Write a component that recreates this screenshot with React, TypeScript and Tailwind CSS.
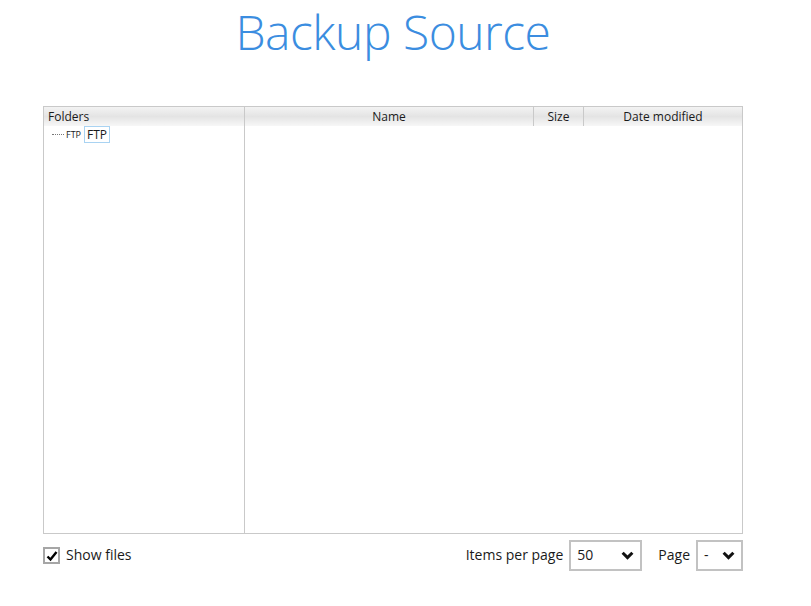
export default function App() {
  const font = { fontFamily: '"Open Sans", "Noto Sans", sans-serif' }
  return (
    <div className="w-[811px] h-[606px] bg-white text-[#1a1a1a]" style={font}>
      <div className="w-[786px]">
        <div className="h-[106px]">
          <h1 className="text-center text-[48px] font-light leading-[64px] tracking-[-0.5px] text-[#3b8de0]">
            Backup Source
          </h1>
        </div>

        {/* Browser panel */}
        <div className="ml-[43px] w-[700px] h-[428px] border border-[#c9c9c9] flex">
          {/* Folders pane */}
          <div className="w-[201px] border-r border-[#c9c9c9] flex flex-col">
            <div className="h-[19px] bg-gradient-to-b from-[#f3f3f3] via-[#e4e4e4] to-[#f7f7f7] px-[4px] text-[12px] leading-[19px]">
              Folders
            </div>
            <div className="flex items-center h-[17px] pl-[8px]">
              <div className="w-[12px] border-t border-dotted border-[#777]" />
              <span className="ml-[2px] text-[9px] leading-none">FTP</span>
              <span className="ml-[3px] border border-[#a9d3f2] px-[2px] text-[12px] leading-[15px]">FTP</span>
            </div>
          </div>

          {/* Files pane */}
          <div className="flex-1 flex flex-col">
            <div className="h-[19px] flex bg-gradient-to-b from-[#f3f3f3] via-[#e4e4e4] to-[#f7f7f7] text-[12px] leading-[19px]">
              <div className="w-[289px] text-center border-r border-[#c9c9c9]">Name</div>
              <div className="w-[50px] text-center border-r border-[#c9c9c9]">Size</div>
              <div className="flex-1 text-center">Date modified</div>
            </div>
          </div>
        </div>

        {/* Footer */}
        <div className="ml-[43px] w-[700px] mt-[6px] flex items-center">
          <label className="flex items-center gap-[6px] text-[14px] leading-[18px]">
            <span className="w-[17px] h-[17px] border-2 border-[#a6a6a6] flex items-center justify-center">
              <svg viewBox="0 0 12 12" className="w-[12px] h-[12px]">
                <path d="M1.5 6.5 L4.5 9.5 L10.5 2" fill="none" stroke="#000" strokeWidth="2.4" />
              </svg>
            </span>
            <span className="-mt-[2px]">Show files</span>
          </label>
          <div className="ml-auto flex items-center text-[14px]">
            <span className="mr-[6px] -mt-[2px]">Items per page</span>
            <div className="w-[73px] h-[31px] border-2 border-[#c2c2c2] flex items-center pl-[6px] pr-[6px]">
              <span className="-mt-[2px]">50</span>
              <svg viewBox="0 0 12 8" className="ml-auto w-[13px] h-[9px]">
                <path d="M1.5 1.5 L6 6 L10.5 1.5" fill="none" stroke="#111" strokeWidth="2.8" />
              </svg>
            </div>
            <span className="ml-[16px] mr-[6px] -mt-[2px]">Page</span>
            <div className="w-[47px] h-[31px] border-2 border-[#c2c2c2] flex items-center pl-[6px] pr-[6px]">
              <span className="-mt-[2px]">-</span>
              <svg viewBox="0 0 12 8" className="ml-auto w-[13px] h-[9px]">
                <path d="M1.5 1.5 L6 6 L10.5 1.5" fill="none" stroke="#111" strokeWidth="2.8" />
              </svg>
            </div>
          </div>
        </div>
      </div>
    </div>
  )
}
